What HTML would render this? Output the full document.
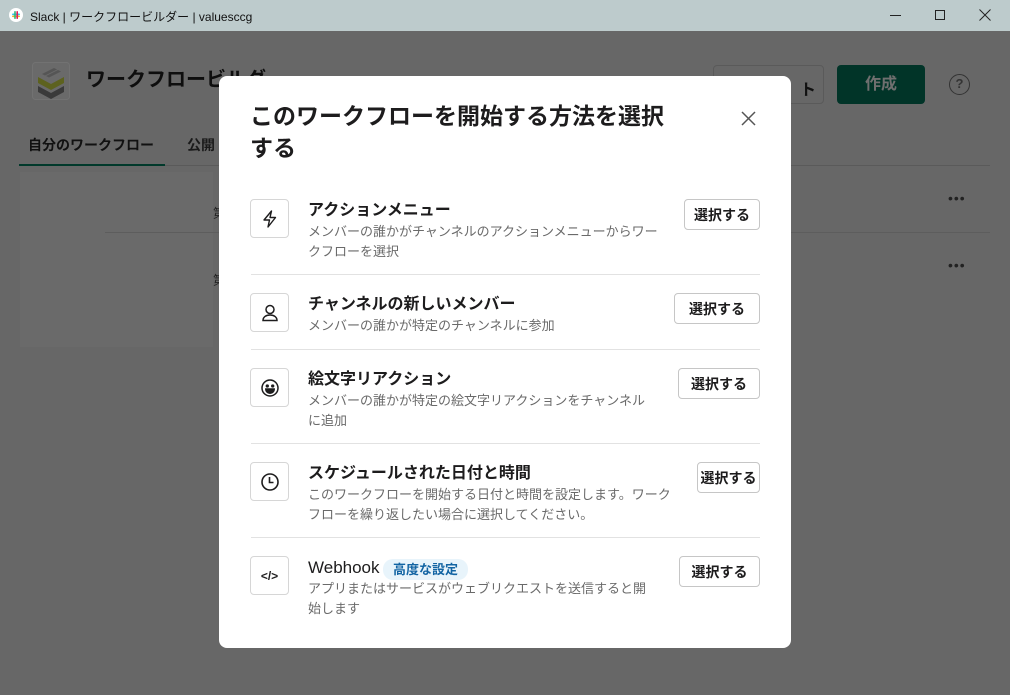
<!DOCTYPE html>
<html><head><meta charset="utf-8"><style>
*{margin:0;padding:0;box-sizing:border-box}
body{width:1010px;height:695px;overflow:hidden;font-family:"Liberation Sans","Noto Sans CJK JP",sans-serif;background:#676767;position:relative;color:#1d1c1d}
.a{position:absolute}
.tb{left:0;top:0;width:1010px;height:31px;background:#bdcbcc;font-size:12px;color:#111}
.bgc{left:1px;top:31px;width:1008px;height:664px;background:#676767}
.modal{left:219px;top:76px;width:572px;height:572px;background:#fff;border-radius:8px}
.ic{left:31px;width:39px;height:39px;border:1px solid #d6d6d6;border-radius:4px;display:flex;align-items:center;justify-content:center}
.t{left:89px;font-size:16px;font-weight:bold;line-height:22px}
.d{left:89px;font-size:13px;color:#6a6a6a;line-height:20px}
.b{right:31px;height:31px;border:1px solid #c6c6c6;border-radius:4px;font-size:14px;font-weight:bold;display:flex;align-items:center;justify-content:center}
.hr{left:32px;width:509px;height:1px;background:#e2e2e2}
</style></head><body>
<div class="a tb">
<svg class="a" style="left:9px;top:8px" width="14" height="14" viewBox="0 0 14 14"><circle cx="7" cy="7" r="7" fill="#fff"/><rect x="3" y="5.5" width="8" height="1.6" rx=".8" fill="#36c5f0"/><rect x="3" y="7.5" width="8" height="1.6" rx=".8" fill="#ecb22e"/><rect x="5.2" y="3" width="1.6" height="8" rx=".8" fill="#2eb67d"/><rect x="7.4" y="3" width="1.6" height="8" rx=".8" fill="#e01e5a"/></svg>
<div class="a" style="left:30px;top:8px">Slack | ワークフロービルダー | valuesccg</div>
<div class="a" style="left:890px;top:15px;width:11px;height:1px;background:#222"></div>
<div class="a" style="left:935px;top:10px;width:10px;height:10px;border:1px solid #222"></div>
<svg class="a" style="left:979px;top:9px" width="12" height="12" viewBox="0 0 12 12"><path d="M.5.5l11 11M11.5.5l-11 11" stroke="#222" stroke-width="1"/></svg>
</div>
<div class="a bgc"></div>
<div class="a" style="left:20px;top:172px;width:193px;height:175px;background:#6a6a6a"></div>
<svg class="a" style="left:32px;top:62px" width="38" height="38" viewBox="0 0 38 38"><rect x=".5" y=".5" width="37" height="37" rx="3" fill="#6a6a6a" stroke="#727272"/><path d="M6 24l13 7 13-7v6l-13 7-13-7z" fill="#3a3a3a"/><path d="M6 15l13 7 13-7v6l-13 7-13-7z" fill="#5d621f"/><path d="M10 12l12-6 3 1.5-12 6zM14 14l12-6 3 1.5-12 6z" fill="#555"/></svg>
<div class="a" style="left:86px;top:63px;font-size:20px;font-weight:bold;color:#0e0e0e">ワークフロービルダー</div>
<div class="a" style="left:713px;top:65px;width:111px;height:39px;border:1px solid #5a5a5a;border-radius:4px;font-size:16px;font-weight:bold;color:#111;padding:10px 0 0 86px">ト</div>
<div class="a" style="left:837px;top:65px;width:88px;height:39px;background:#013428;border-radius:4px;color:#6f6f6f;font-size:16px;font-weight:bold;text-align:center;line-height:39px">作成</div>
<div class="a" style="left:949px;top:74px;width:21px;height:21px;border:1.5px solid #333;border-radius:50%;font-size:13px;color:#333;text-align:center;line-height:18px;font-weight:bold">?</div>
<div class="a" style="left:28px;top:135px;font-size:14px;font-weight:bold;color:#111">自分のワークフロー</div>
<div class="a" style="left:187px;top:135px;font-size:14px;font-weight:bold;color:#1a1a1a">公開</div>
<div class="a" style="left:19px;top:165px;width:971px;height:1px;background:#5a5a5a"></div>
<div class="a" style="left:19px;top:164px;width:146px;height:2px;background:#01392b"></div>
<div class="a" style="left:105px;top:232px;width:885px;height:1px;background:#5d5d5d"></div>
<div class="a" style="left:213px;top:203px;font-size:13px;color:#222">第</div>
<div class="a" style="left:213px;top:270px;font-size:13px;color:#222">第</div>
<div class="a" style="left:948px;top:190px;font-size:14px;color:#222;letter-spacing:1px">•••</div>
<div class="a" style="left:948px;top:257px;font-size:14px;color:#222;letter-spacing:1px">•••</div>

<div class="a modal">
<div class="a" style="left:31px;top:24px;font-size:23px;font-weight:bold;line-height:32px;width:425px">このワークフローを開始する方法を選択する</div>
<svg class="a" style="left:522px;top:35px" width="15" height="15" viewBox="0 0 15 15"><path d="M1 1l13 13M14 1L1 14" stroke="#555" stroke-width="1.5"/></svg>

<div class="a ic" style="top:123px"><svg width="20" height="20" viewBox="0 0 20 20" fill="none" stroke="#1d1c1d" stroke-width="1.4" stroke-linejoin="round"><path d="M11.5 2L4 11h5.5l-1.5 7 7.5-9.5H10z"/></svg></div>
<div class="a t" style="top:124px">アクションメニュー</div>
<div class="a d" style="top:146px;width:358px">メンバーの誰かがチャンネルのアクションメニューからワークフローを選択</div>
<div class="a b" style="top:123px;width:76px">選択する</div>
<div class="a hr" style="top:198px"></div>

<div class="a ic" style="top:217px"><svg width="20" height="20" viewBox="0 0 20 20" fill="none" stroke="#1d1c1d" stroke-width="1.5"><circle cx="10" cy="6.5" r="4"/><path d="M3 17.5c0-3.5 3-5.5 7-5.5s7 2 7 5.5z"/></svg></div>
<div class="a t" style="top:218px">チャンネルの新しいメンバー</div>
<div class="a d" style="top:240px;width:360px">メンバーの誰かが特定のチャンネルに参加</div>
<div class="a b" style="top:217px;width:86px">選択する</div>
<div class="a hr" style="top:273px"></div>

<div class="a ic" style="top:292px"><svg width="20" height="20" viewBox="0 0 20 20" fill="none" stroke="#1d1c1d" stroke-width="1.5"><circle cx="10" cy="10" r="8"/><circle cx="7.3" cy="8" r=".9" fill="#1d1c1d"/><circle cx="12.7" cy="8" r=".9" fill="#1d1c1d"/><path d="M5.8 11h8.4c0 2.6-2 4.3-4.2 4.3s-4.2-1.7-4.2-4.3z" fill="#1d1c1d"/></svg></div>
<div class="a t" style="top:293px">絵文字リアクション</div>
<div class="a d" style="top:315px;width:345px">メンバーの誰かが特定の絵文字リアクションをチャンネルに追加</div>
<div class="a b" style="top:292px;width:82px">選択する</div>
<div class="a hr" style="top:367px"></div>

<div class="a ic" style="top:386px"><svg width="20" height="20" viewBox="0 0 20 20" fill="none" stroke="#1d1c1d" stroke-width="1.6"><circle cx="10" cy="10" r="8"/><path d="M9.5 5v5.5h4"/></svg></div>
<div class="a t" style="top:387px">スケジュールされた日付と時間</div>
<div class="a d" style="top:409px;width:372px">このワークフローを開始する日付と時間を設定します。ワークフローを繰り返したい場合に選択してください。</div>
<div class="a b" style="top:386px;width:63px">選択する</div>
<div class="a hr" style="top:461px"></div>

<div class="a ic" style="top:480px;font-size:12px;font-weight:bold">&lt;/&gt;</div>
<div class="a t" style="top:481px;font-weight:normal;font-size:17px">Webhook</div>
<div class="a" style="left:164px;top:483px;width:85px;height:21px;background:#e8f4fb;border-radius:10px;color:#1264a3;font-size:13px;font-weight:bold;text-align:center;line-height:21px">高度な設定</div>
<div class="a d" style="top:503px;width:345px">アプリまたはサービスがウェブリクエストを送信すると開始します</div>
<div class="a b" style="top:480px;width:81px">選択する</div>
</div>
</body></html>
